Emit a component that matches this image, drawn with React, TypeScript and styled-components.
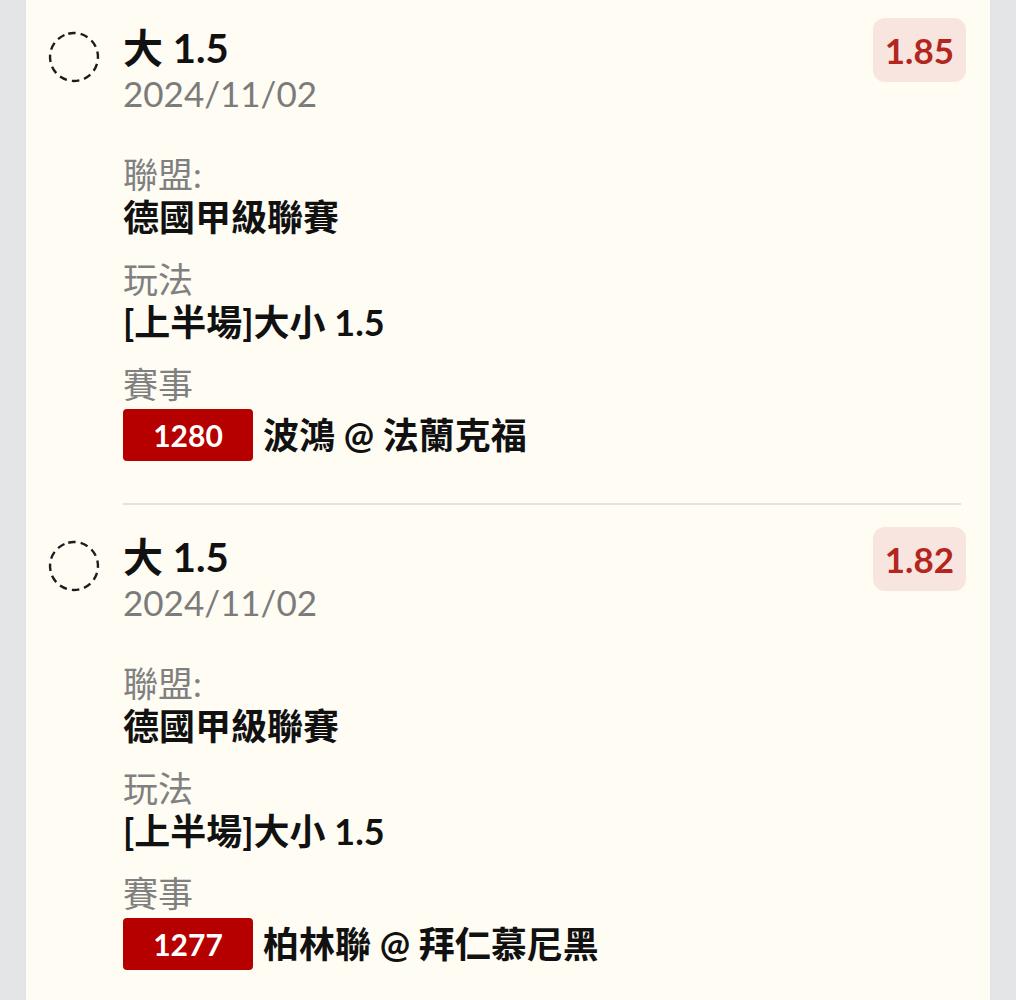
import React from "react";
import styled, { createGlobalStyle } from "styled-components";

const GlobalStyle = createGlobalStyle`
  html, body {
    margin: 0;
    padding: 0;
    background: #e4e5e7;
  }
  body {
    font-family: "Lato", "Noto Sans CJK TC", sans-serif;
  }
`;

const Page = styled.div`
  padding: 0 26px;
  height: 1000px;
  overflow: hidden;
`;

const Panel = styled.div`
  background: #fefcf3;
  padding: 18px 24px 40px 22px;
  min-height: 1000px;
  box-sizing: border-box;
`;

const Item = styled.div`
  display: grid;
  grid-template-columns: 52px 1fr auto;
  column-gap: 23px;
  align-items: start;
`;

const Check = styled.svg`
  width: 52px;
  height: 52px;
  margin-top: 13px;
`;

const Content = styled.div`
  display: flex;
  flex-direction: column;
`;

const Title = styled.div`
  font-size: 40px;
  font-weight: 700;
  color: #111;
  line-height: 42px;
  margin-top: 9px;
`;

const DateText = styled.div`
  font-size: 35px;
  color: #7b7b7b;
  line-height: 42px;
  margin-top: 3px;
`;

const Field = styled.div<{ $first?: boolean }>`
  display: flex;
  flex-direction: column;
  margin-top: ${(p) => (p.$first ? "39px" : "19px")};
`;

const Label = styled.div`
  font-size: 35px;
  color: #808080;
  line-height: 42px;
`;

const Value = styled.div`
  font-size: 36px;
  font-weight: 700;
  color: #111;
  line-height: 44px;
`;

const MatchRow = styled.div`
  display: flex;
  align-items: center;
  gap: 10px;
  margin-top: 4px;
`;

const MatchNo = styled.span`
  display: inline-flex;
  align-items: center;
  justify-content: center;
  width: 130px;
  height: 52px;
  border-radius: 4px;
  background: #b60000;
  color: #fff;
  font-size: 30px;
  font-weight: 700;
`;

const Odds = styled.div`
  background: #f8e5df;
  color: #b3261e;
  font-size: 35px;
  font-weight: 700;
  border-radius: 12px;
  padding: 0 12px;
  height: 64px;
  display: flex;
  align-items: center;
`;

const Divider = styled.hr`
  border: none;
  border-top: 2px solid #e4e2dc;
  margin: 42px 5px 22px 75px;
`;

type Bet = {
  title: string;
  date: string;
  league: string;
  play: string;
  no: string;
  match: string;
  odds: string;
};

const bets: Bet[] = [
  {
    title: "大 1.5",
    date: "2024/11/02",
    league: "德國甲級聯賽",
    play: "[上半場]大小 1.5",
    no: "1280",
    match: "波鴻 @ 法蘭克福",
    odds: "1.85",
  },
  {
    title: "大 1.5",
    date: "2024/11/02",
    league: "德國甲級聯賽",
    play: "[上半場]大小 1.5",
    no: "1277",
    match: "柏林聯 @ 拜仁慕尼黑",
    odds: "1.82",
  },
];

const DashedCircle = () => (
  <Check viewBox="0 0 52 52">
    <circle
      cx="26"
      cy="26"
      r="24"
      fill="none"
      stroke="#1c1c1c"
      strokeWidth="2.4"
      strokeDasharray="7.5 5.07"
      transform="rotate(-104 26 26)"
    />
  </Check>
);

export default function App() {
  return (
    <>
      <GlobalStyle />
      <Page>
        <Panel>
          {bets.map((b, i) => (
            <React.Fragment key={i}>
              {i > 0 && <Divider />}
              <Item>
                <DashedCircle />
                <Content>
                  <Title>{b.title}</Title>
                  <DateText>{b.date}</DateText>
                  <Field $first>
                    <Label>聯盟:</Label>
                    <Value>{b.league}</Value>
                  </Field>
                  <Field>
                    <Label>玩法</Label>
                    <Value>{b.play}</Value>
                  </Field>
                  <Field>
                    <Label>賽事</Label>
                    <MatchRow>
                      <MatchNo>{b.no}</MatchNo>
                      <Value>{b.match}</Value>
                    </MatchRow>
                  </Field>
                </Content>
                <Odds>{b.odds}</Odds>
              </Item>
            </React.Fragment>
          ))}
        </Panel>
      </Page>
    </>
  );
}
